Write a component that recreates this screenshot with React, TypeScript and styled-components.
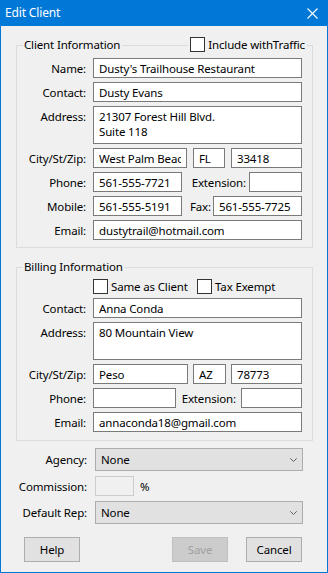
import React from 'react';
import styled, { createGlobalStyle } from 'styled-components';

const font = `"Noto Sans", "Open Sans", sans-serif`;
const blue = `#0078d7`;
const frame = `#dcdcdc`;
const edge = `#7a7a7a`;

const GlobalStyle = createGlobalStyle`
    html, body {
        margin: 0;
        padding: 0;
        background: #f0f0f0;
    }
    body {
        font-family: ${font};
        font-size: 11.5px;
        letter-spacing: -0.15px;
        color: #000;
    }
    * {
        box-sizing: border-box;
    }
`;

const Window = styled.div`
    width: 328px;
    height: 573px;
    display: flex;
    flex-direction: column;
    background: #f0f0f0;
    overflow: hidden;
`;
const TitleBar = styled.header`
    height: 26px;
    flex: none;
    background: ${blue};
    color: #fff;
    display: flex;
    align-items: center;
    justify-content: space-between;
    padding: 0 10px 0 5px;
    font-size: 12px;
    line-height: 16px;
`;
const Body = styled.div`
    flex: 1;
    border: 1px solid ${blue};
    border-top: none;
    padding-left: 15px;
    display: flex;
    flex-direction: column;
`;
const Group = styled.section<{ $mt: number; $pt: number; $pb: number }>`
    position: relative;
    width: 297px;
    margin-top: ${p => p.$mt}px;
    border: 1px solid ${frame};
    padding: ${p => p.$pt}px 10px ${p => p.$pb}px 0;
    display: grid;
    grid-template-columns: 69px 209px;
    column-gap: 7px;
    row-gap: 4px;
`;
const Legend = styled.div`
    position: absolute;
    top: -9px;
    left: 6px;
    padding: 0 2px 0 1px;
    background: #f0f0f0;
    line-height: 16px;
`;
const Corner = styled.div`
    position: absolute;
    top: -9px;
    right: 5px;
    padding: 0 2px 0 2px;
    background: #f0f0f0;
    line-height: 16px;
`;
const Label = styled.label<{ $top?: boolean; $pr?: number }>`
    text-align: right;
    white-space: nowrap;
    line-height: 15px;
    align-self: ${p => (p.$top ? 'start' : 'center')};
    padding-top: ${p => (p.$top ? 3 : 0)}px;
    padding-right: ${p => p.$pr || 0}px;
`;
const Field = styled.input`
    width: 100%;
    height: 20px;
    margin: 0;
    border: 1px solid ${edge};
    background: #fff;
    padding: 0 5px;
    font: inherit;
    letter-spacing: inherit;
    color: #000;
    outline: none;
`;
const Area = styled.textarea`
    width: 100%;
    height: 38px;
    margin: 0;
    border: 1px solid ${edge};
    background: #fff;
    padding: 2px 5px;
    font: inherit;
    letter-spacing: inherit;
    line-height: 15px;
    color: #000;
    resize: none;
    overflow: hidden;
    outline: none;
    display: block;
`;
const Inline = styled.div<{ $cols: string; $gap?: number }>`
    display: grid;
    grid-template-columns: ${p => p.$cols};
    column-gap: ${p => p.$gap || 0}px;
    align-items: center;
`;
const CheckRow = styled.div`
    height: 15px;
    display: flex;
    align-items: center;
`;
const Check = styled.span<{ $w?: number }>`
    display: flex;
    align-items: center;
    gap: 3px;
    white-space: nowrap;
    width: ${p => (p.$w ? `${p.$w}px` : 'auto')};
    line-height: 15px;
    &::before {
        content: '';
        width: 13px;
        height: 13px;
        flex: none;
        border: 1px solid #333;
        background: #fff;
    }
`;
const Bottom = styled.div`
    margin-top: 7px;
    display: grid;
    grid-template-columns: 71px 208px;
    column-gap: 8px;
    row-gap: 5px;
    align-items: center;
`;
const Combo = styled.div`
    height: 23px;
    border: 1px solid #adadad;
    background: #e1e1e1;
    padding: 0 5px;
    display: flex;
    align-items: center;
    justify-content: space-between;
`;
const Percent = styled.div`
    display: flex;
    align-items: center;
    gap: 6px;
`;
const Small = styled.span`
    width: 39px;
    height: 20px;
    border: 1px solid #cccccc;
    background: #f0f0f0;
`;
const Buttons = styled.div`
    margin: 13px 0 0 8px;
    width: 278px;
    display: flex;
    gap: 18px;
`;
const Button = styled.button<{ $push?: boolean }>`
    width: 56px;
    height: 25px;
    margin: 0 0 0 ${p => (p.$push ? 'auto' : '0')};
    border: 1px solid #adadad;
    background: #e1e1e1;
    font: inherit;
    letter-spacing: inherit;
    color: #000;
    padding: 0;
    &:disabled {
        background: #cccccc;
        border-color: #bfbfbf;
        color: #a0a0a0;
    }
`;

const Close = () => (
    <svg width="11" height="11" viewBox="0 0 11 11">
        <path d="M0.5 0.5 L10.5 10.5 M10.5 0.5 L0.5 10.5" stroke="#fff" strokeWidth="1.1" />
    </svg>
);

const Chevron = () => (
    <svg width="7" height="4" viewBox="0 0 7 4">
        <path d="M0.3 0.3 L3.5 3.5 L6.7 0.3" stroke="#606060" fill="none" strokeWidth="1" />
    </svg>
);

const App = () => {
    return (
        <>
            <GlobalStyle />
            <Window>
                <TitleBar>
                    <span>Edit Client</span>
                    <Close />
                </TitleBar>
                <Body>
                    <Group $mt={19} $pt={12} $pb={7}>
                        <Legend>Client Information</Legend>
                        <Corner><Check>Include withTraffic</Check></Corner>

                        <Label>Name:</Label>
                        <Field readOnly value="Dusty's Trailhouse Restaurant" />
                        <Label>Contact:</Label>
                        <Field readOnly value="Dusty Evans" />
                        <Label $top>Address:</Label>
                        <Area readOnly value={'21307 Forest Hill Blvd.\nSuite 118'} />
                        <Label>City/St/Zip:</Label>
                        <Inline $cols="94px 32px 71px" $gap={6}>
                            <Field readOnly value="West Palm Beach" />
                            <Field readOnly value="FL" />
                            <Field readOnly value="33418" />
                        </Inline>
                        <Label>Phone:</Label>
                        <Inline $cols="89px 1fr 53px">
                            <Field readOnly value="561-555-7721" />
                            <Label $pr={3}>Extension:</Label>
                            <Field readOnly value="" />
                        </Inline>
                        <Label>Mobile:</Label>
                        <Inline $cols="89px 1fr 89px">
                            <Field readOnly value="561-555-5191" />
                            <Label $pr={2}>Fax:</Label>
                            <Field readOnly value="561-555-7725" />
                        </Inline>
                        <Label>Email:</Label>
                        <Field readOnly value="dustytrail@hotmail.com" />
                    </Group>

                    <Group $mt={19} $pt={11} $pb={8}>
                        <Legend>Billing Information</Legend>

                        <span />
                        <CheckRow>
                            <Check $w={104}>Same as Client</Check>
                            <Check>Tax Exempt</Check>
                        </CheckRow>
                        <Label>Contact:</Label>
                        <Field readOnly value="Anna Conda" />
                        <Label $top>Address:</Label>
                        <Area readOnly value="80 Mountain View" />
                        <Label>City/St/Zip:</Label>
                        <Inline $cols="95px 33px 71px" $gap={5}>
                            <Field readOnly value="Peso" />
                            <Field readOnly value="AZ" />
                            <Field readOnly value="78773" />
                        </Inline>
                        <Label>Phone:</Label>
                        <Inline $cols="83px 1fr 61px">
                            <Field readOnly value="" />
                            <Label $pr={5}>Extension:</Label>
                            <Field readOnly value="" />
                        </Inline>
                        <Label>Email:</Label>
                        <Field readOnly value="annaconda18@gmail.com" />
                    </Group>

                    <Bottom>
                        <Label>Agency:</Label>
                        <Combo><span>None</span><Chevron /></Combo>
                        <Label>Commission:</Label>
                        <Percent><Small /><span>%</span></Percent>
                        <Label>Default Rep:</Label>
                        <Combo><span>None</span><Chevron /></Combo>
                    </Bottom>

                    <Buttons>
                        <Button>Help</Button>
                        <Button $push disabled>Save</Button>
                        <Button>Cancel</Button>
                    </Buttons>
                </Body>
            </Window>
        </>
    );
};

export default App;
